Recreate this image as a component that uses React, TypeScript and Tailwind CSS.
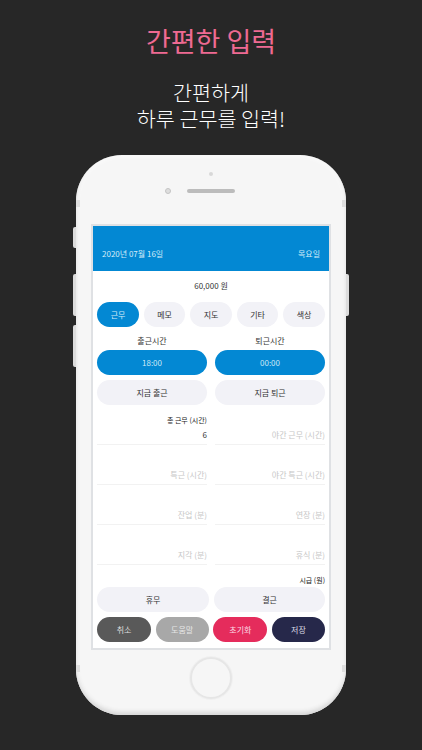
const kr = "font-['Noto_Sans_CJK_KR',sans-serif]"

function Pill({ label, className }: { label: string; className: string }) {
  return (
    <div className={`flex h-[25px] items-center justify-center rounded-[13px] text-[8px] ${className}`}>
      {label}
    </div>
  )
}

function Field({ label, value, top }: { label: string; value?: string; top?: string }) {
  return (
    <div className="flex h-10 w-[110px] flex-col justify-end border-b border-[#f2f2f2] pb-[4px] text-right text-[8px] leading-[10px]">
      {top && <div className="mb-[5px] text-[7px] text-[#222]">{top}</div>}
      <div className={value ? 'text-[#333]' : 'text-[#c6c6c6]'}>{value ?? label}</div>
    </div>
  )
}

function SideButton({ className }: { className: string }) {
  return <div className={`absolute w-[3px] bg-[#dcdcdc] ${className}`} />
}

function Band({ className }: { className: string }) {
  return <div className={`absolute h-[7px] w-[4px] bg-[#dedede] ${className}`} />
}

export default function App() {
  return (
    <div className={`h-[750px] w-[422px] overflow-hidden bg-[#272727] pt-[22px] ${kr}`}>
      <h1 className="text-center text-[27px] font-normal leading-[38px] text-[#ee6a92]">간편한 입력</h1>
      <div className="mt-[19px] text-center text-[20.7px] font-light leading-[26px] text-white">
        <div className="h-[26px]">간편하게</div>
        <div className="h-[26px]">하루 근무를 입력!</div>
      </div>

      <div className="relative mx-auto mt-[24px] h-[560px] w-[270px] rounded-[46px] bg-[#f6f6f6] pt-[69px] shadow-[inset_0_-3px_4px_#d6d6d6,inset_0_0_6px_#ffffff]">
        <SideButton className="-left-[3px] top-[72px] h-[21px] rounded-l-[2px]" />
        <SideButton className="-left-[3px] top-[119px] h-[42px] rounded-l-[2px]" />
        <SideButton className="-left-[3px] top-[170px] h-[42px] rounded-l-[2px]" />
        <SideButton className="-right-[3px] top-[119px] h-[42px] rounded-r-[2px]" />

        <Band className="left-0 top-[45px]" />
        <Band className="right-0 top-[45px]" />
        <Band className="bottom-[43px] left-0" />
        <Band className="bottom-[43px] right-0" />

        <div className="absolute left-[133px] top-[17px] h-[4px] w-[4px] rounded-full bg-[#d8d8d8]" />
        <div className="absolute left-[89px] top-[33px] h-[6px] w-[6px] rounded-full border-[1.5px] border-[#c4c4c4] bg-[#dedede]" />
        <div className="absolute left-[111px] top-[34px] h-[4px] w-[48px] rounded-full bg-[#bcbcbc]" />

        <div className="ml-[15px] h-[426px] w-[240px] border-2 border-[#dfe1e4] bg-white">
          <div className="flex h-[45px] items-end justify-between bg-[#0388d3] pb-[12px] pl-[9px] pr-[9px] text-[8px] leading-[10px] text-[#d5ecf8]">
            <span>2020년 07월 16일</span>
            <span>목요일</span>
          </div>
          <div className="pt-[8px] text-center text-[8px] leading-[13px] text-[#333]">60,000 원</div>

          <div className="mt-[10px] flex justify-between px-[4px]">
            <Pill label="근무" className="w-[42px] bg-[#0388d3] text-[#d5ecf8]" />
            <Pill label="메모" className="w-[41px] bg-[#f2f2f7] text-[#333]" />
            <Pill label="지도" className="w-[42px] bg-[#f2f2f7] text-[#333]" />
            <Pill label="기타" className="w-[41px] bg-[#f2f2f7] text-[#333]" />
            <Pill label="색상" className="w-[42px] bg-[#f2f2f7] text-[#333]" />
          </div>

          <div className="mt-[6px] grid grid-cols-[110px_110px] justify-between gap-y-[5px] px-[4px]">
            <div className="mb-[-3px] text-center text-[8px] leading-[15px] text-[#333]">출근시간</div>
            <div className="mb-[-3px] text-center text-[8px] leading-[15px] text-[#333]">퇴근시간</div>
            <Pill label="18:00" className="bg-[#0388d3] text-[#cfe8f6]" />
            <Pill label="00:00" className="bg-[#0388d3] text-[#cfe8f6]" />
            <Pill label="지금 출근" className="bg-[#f2f2f7] text-[#333]" />
            <Pill label="지금 퇴근" className="bg-[#f2f2f7] text-[#333]" />
          </div>

          <div className="flex justify-between px-[4px]">
            <div className="flex flex-col">
              <Field label="총 근무 (시간)" value="6" top="총 근무 (시간)" />
              <Field label="특근 (시간)" />
              <Field label="잔업 (분)" />
              <Field label="지각 (분)" />
            </div>
            <div className="flex flex-col">
              <Field label="야간 근무 (시간)" />
              <Field label="야간 특근 (시간)" />
              <Field label="연장 (분)" />
              <Field label="휴식 (분)" />
            </div>
          </div>

          <div className="px-[4px] pt-[10px] text-right text-[7px] leading-[10px] text-[#222]">시급 (원)</div>

          <div className="mt-[2px] flex justify-between px-[4px]">
            <Pill label="휴무" className="w-[112px] bg-[#f2f2f7] text-[#333]" />
            <Pill label="결근" className="w-[111px] bg-[#f2f2f7] text-[#333]" />
          </div>
          <div className="mt-[5px] flex justify-between px-[4px]">
            <Pill label="취소" className="w-[54px] bg-[#595959] text-[#ddd]" />
            <Pill label="도움말" className="w-[53px] bg-[#a8a8a8] text-[#e6e6e6]" />
            <Pill label="초기화" className="w-[54px] bg-[#e52c5c] text-[#fbdbe3]" />
            <Pill label="저장" className="w-[53px] bg-[#26284a] text-[#dcdce4]" />
          </div>
        </div>

        <div className="mx-auto mt-[7px] h-[42px] w-[42px] rounded-full border-2 border-[#e6e6e6] bg-[#f6f6f6] shadow-[0_0_0_1px_#f0f0f0]" />
      </div>
    </div>
  )
}
